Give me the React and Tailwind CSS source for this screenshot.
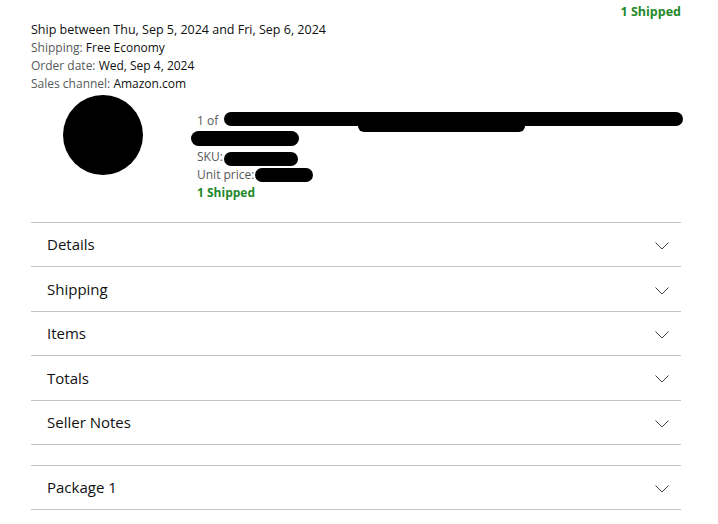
const sections = ['Details', 'Shipping', 'Items', 'Totals', 'Seller Notes'];

function Chevron() {
  return (
    <svg width="14" height="8" viewBox="0 0 14 8" className="mr-[12px] mt-[3px]">
      <path d="M0.5 0.5 L7 7 L13.5 0.5" fill="none" stroke="#444" strokeWidth="1" />
    </svg>
  );
}

function Row({ label }) {
  return (
    <div className="flex h-[44.4px] items-center justify-between border-b border-[#c4c4c4] pl-4">
      <span className="text-[15px] text-[#0f1111]">{label}</span>
      <Chevron />
    </div>
  );
}

export default function App() {
  return (
    <div className="h-[524px] w-[718px] overflow-hidden bg-white font-['Open_Sans',sans-serif] text-[12px] text-[#0f1111]">
      <div className="ml-[31px] w-[650px]">
        <div className="flex justify-end pt-[3px] text-[12.5px] font-bold leading-[18px] text-[#23892a]">1 Shipped</div>

        {/* order meta */}
        <div className="leading-[18px]">
          <div className="text-[12.5px]">Ship between Thu, Sep 5, 2024 and Fri, Sep 6, 2024</div>
          <div><span className="text-[#565959]">Shipping:</span> Free Economy</div>
          <div><span className="text-[#565959]">Order date:</span> Wed, Sep 4, 2024</div>
          <div><span className="text-[#565959]">Sales channel:</span> Amazon.com</div>
        </div>

        {/* item */}
        <div className="mt-[2px] flex">
          <div className="ml-[32px] h-[80px] w-[80px] shrink-0 rounded-full bg-black" />
          <div className="relative ml-[54px] mt-[17px] flex-1 leading-[18px] text-[#565959]">
            <div>1 of</div>
            <div className="h-[18px]" />
            <div>SKU:</div>
            <div>Unit price:</div>
            <div className="font-bold text-[#23892a]">1 Shipped</div>

            {/* redactions */}
            <div className="absolute left-[27px] top-0 h-[14px] w-[459px] rounded-full bg-black" />
            <div className="absolute left-[161px] top-[6px] h-[14px] w-[167px] rounded-[6px] bg-black" />
            <div className="absolute left-[-6px] top-[19px] h-[15px] w-[108px] rounded-full bg-black" />
            <div className="absolute left-[27px] top-[40px] h-[14px] w-[74px] rounded-full bg-black" />
            <div className="absolute left-[58px] top-[56px] h-[14px] w-[58px] rounded-full bg-black" />
          </div>
        </div>

        {/* accordions */}
        <div className="mt-[20px] border-t border-[#c4c4c4]">
          {sections.map((s) => (
            <Row key={s} label={s} />
          ))}
        </div>
        <div className="mt-[20px] border-t border-[#c4c4c4]">
          <Row label="Package 1" />
        </div>
      </div>
    </div>
  );
}
